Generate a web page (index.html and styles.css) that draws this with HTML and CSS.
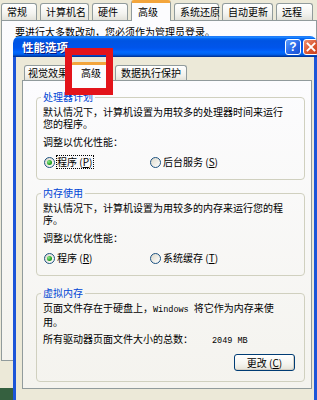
FILE: index.html
```html
<!DOCTYPE html>
<html lang="zh-CN">
<head>
<meta charset="utf-8">
<title>性能选项</title>
<link rel="stylesheet" href="styles.css">
</head>
<body>
<div class="desk">
  <div class="sysprop">
    <div class="stabs">
      <div class="stab w36">常规</div>
      <div class="stab w49">计算机名</div>
      <div class="stab w36">硬件</div>
      <div class="stab sel w40">高级</div>
      <div class="stab w45">系统还原</div>
      <div class="stab w51">自动更新</div>
      <div class="stab w37">远程</div>
    </div>
    <div class="spanel">
      <p class="snote">要进行大多数改动，您必须作为管理员登录。</p>
    </div>
  </div>

  <div class="dialog">
    <div class="titlebar">
      <span class="title">性能选项</span>
      <span class="tbtn help">?</span>
      <span class="tbtn close"><svg width="10" height="10" viewBox="0 0 10 10"><path d="M1.5 1.5 L8.5 8.5 M8.5 1.5 L1.5 8.5" stroke="#fff" stroke-width="1.8" stroke-linecap="square"/></svg></span>
    </div>
    <div class="dbody">
      <div class="tabs">
        <div class="tab t1">视觉效果</div>
        <div class="tab sel">高级</div>
        <div class="tab t3">数据执行保护</div>
      </div>
      <div class="panel">
        <fieldset class="group">
          <legend>处理器计划</legend>
          <p class="desc">默认情况下，计算机设置为用较多的处理器时间来运行<br>您的程序。</p>
          <p class="lbl">调整以优化性能：</p>
          <div class="opts">
            <div class="opt"><span class="radio on"></span><span class="otext focus">程序 (<u>P</u>)</span></div>
            <div class="opt"><span class="radio"></span><span class="otext">后台服务 (<u>S</u>)</span></div>
          </div>
        </fieldset>

        <fieldset class="group g2">
          <legend>内存使用</legend>
          <p class="desc">默认情况下，计算机设置为用较多的内存来运行您的程<br>序。</p>
          <p class="lbl">调整以优化性能：</p>
          <div class="opts">
            <div class="opt"><span class="radio on"></span><span class="otext">程序 (<u>R</u>)</span></div>
            <div class="opt"><span class="radio"></span><span class="otext">系统缓存 (<u>T</u>)</span></div>
          </div>
        </fieldset>

        <fieldset class="group g3">
          <legend>虚拟内存</legend>
          <p class="desc">页面文件存在于硬盘上，<span class="mono">Windows </span>将它作为内存来使<br>用。</p>
          <div class="total">
            <span class="total-l">所有驱动器页面文件大小的总数：</span>
            <span class="mono">2049 MB</span>
          </div>
          <div class="btnrow">
            <span class="btn">更改 (<u>C</u>)</span>
          </div>
        </fieldset>
      </div>
    </div>
  </div>

  <div class="redbox"></div>
</div>
</body>
</html>
```

FILE: styles.css
```css
html, body {
  margin: 0;
  padding: 0;
}

body {
  width: 317px;
  height: 400px;
  overflow: hidden;
  background: #35603F;
  font-family: "Noto Sans CJK SC", "Noto Sans", sans-serif;
  font-size: 10px;
  line-height: 12px;
  color: #000;
}

.desk {
  position: relative;
  width: 317px;
  height: 400px;
  overflow: hidden;
}

/* ---------- background window (System Properties) ---------- */
.sysprop {
  position: absolute;
  left: 0;
  top: 0;
  width: 317px;
  height: 388px;
  background: #ECE9D8;
  display: flex;
  flex-direction: column;
}

.stabs {
  display: flex;
  align-items: flex-end;
  gap: 3px;
  height: 20px;
  padding-left: 1px;
  position: relative;
  z-index: 1;
}

.stab {
  box-sizing: border-box;
  height: 17px;
  padding-left: 5px;
  border: 1px solid #919B9C;
  border-bottom: none;
  border-radius: 3px 3px 0 0;
  background: linear-gradient(#FFFFFF, #F3F3EF 60%, #E3E2DA);
  display: flex;
  align-items: center;
  white-space: nowrap;
  flex: none;
}

.stab.sel {
  height: 21px;
  margin-bottom: -1px;
  padding-left: 6px;
  background: #FCFCFE;
  border-top: 3px solid #F3A53C;
}

.w36 { width: 36px; }
.w37 { width: 37px; }
.w40 { width: 40px; }
.w45 { width: 45px; }
.w49 { width: 49px; }
.w51 { width: 51px; }

.spanel {
  box-sizing: border-box;
  height: 341px;
  margin-left: 1px;
  border: 1px solid #919B9C;
  background: linear-gradient(#FCFCFE, #F4F3EE);
}

.snote {
  margin: 5px 0 0 13px;
  white-space: nowrap;
}

/* ---------- dialog ---------- */
.dialog {
  position: absolute;
  left: 13px;
  top: 36px;
  width: 304px;
  height: 364px;
  display: flex;
  flex-direction: column;
  z-index: 2;
}

.titlebar {
  flex: none;
  height: 21px;
  border-radius: 7px 7px 0 0;
  background: linear-gradient(to bottom,
    #0058EE 0%, #3593FF 4%, #288EFF 6%, #127DFF 8%, #036FFC 10%,
    #0262EE 14%, #0057E5 20%, #0054E3 24%, #0055EB 56%, #005BF5 66%,
    #026AFE 76%, #0062EF 86%, #0052D6 92%, #0040AB 94%, #003092 100%);
  display: flex;
  align-items: center;
  padding-left: 9px;
  overflow: hidden;
}

.title {
  color: #fff;
  font-weight: 700;
  font-size: 11.5px;
  text-shadow: 1px 1px 0 #0A1883;
  white-space: nowrap;
}

.tbtn {
  box-sizing: border-box;
  flex: none;
  width: 16px;
  height: 16px;
  border: 1px solid #fff;
  border-radius: 3px;
  display: flex;
  align-items: center;
  justify-content: center;
}

.help {
  margin-left: auto;
  background: linear-gradient(135deg, #5A9CFF, #2663E6 60%, #1A52D0);
  color: #fff;
  font-family: "Liberation Sans", sans-serif;
  font-weight: 700;
  font-size: 12px;
}

.close {
  margin-left: 2px;
  margin-right: -2px;
  background: linear-gradient(135deg, #EE9274, #DA5530 55%, #C8401C);
}

.dbody {
  flex: 1;
  background: #ECE9D8;
  border-left: 3px solid #1C55D8;
  border-right: 3px solid #1C55D8;
  padding: 5px 2px 0 6px;
  display: flex;
  flex-direction: column;
}

.tabs {
  display: flex;
  align-items: flex-end;
  height: 18px;
  padding-left: 2px;
  position: relative;
  z-index: 1;
}

.tab {
  box-sizing: border-box;
  flex: none;
  height: 15px;
  padding: 0 5px;
  border: 1px solid #919B9C;
  border-bottom: none;
  border-radius: 3px 3px 0 0;
  background: linear-gradient(#FFFFFF, #F0F0EA 70%, #E3E2DA);
  display: flex;
  align-items: center;
  white-space: nowrap;
}

.tab.t1 { padding: 0 4px 0 3px; }
.tab.t3 { margin-left: 4px; }

.tab.sel {
  height: 19px;
  margin: 0 0 -1px -2px;
  padding: 0 9px;
  background: #FCFCFE;
  border-top: 3px solid #F3A53C;
  position: relative;
}

.panel {
  box-sizing: border-box;
  height: 309px;
  border: 1px solid #919B9C;
  background: linear-gradient(#FCFCFE, #F4F3EE);
  padding: 10px 6px 0 13px;
}

.group {
  margin: 0;
  min-width: 0;
  border: 1px solid #D0D0BF;
  border-radius: 4px;
  padding: 3px 9px 10px 6px;
}

.group.g2 { margin-top: 7px; }
.group.g3 { margin-top: 11px; }

.group legend {
  margin-left: -2px;
  padding: 0 2px;
  color: #0046D5;
  line-height: 12px;
  white-space: nowrap;
}

.desc {
  margin: 0;
  line-height: 12px;
  white-space: nowrap;
}

.lbl {
  margin: 6px 0 0;
  white-space: nowrap;
}

.opts {
  display: flex;
  align-items: center;
  height: 14px;
  margin-top: 7px;
  padding-left: 1px;
}

.opt {
  display: flex;
  align-items: center;
  width: 106px;
  flex: none;
}

.radio {
  box-sizing: border-box;
  flex: none;
  width: 11px;
  height: 11px;
  border: 1px solid #1C5180;
  border-radius: 50%;
  background: linear-gradient(135deg, #DCD9CB, #FFFFFF);
  display: flex;
  align-items: center;
  justify-content: center;
}

.radio.on::after {
  content: "";
  width: 5px;
  height: 5px;
  border-radius: 50%;
  background: radial-gradient(circle at 35% 35%, #8BEA8B, #21A121 60%, #188A18);
}

.otext {
  margin-left: 1px;
  padding: 0 1px 0 0;
  border: 1px dotted transparent;
  line-height: 12px;
  white-space: nowrap;
}

.otext.focus { border-color: #000; }

.mono {
  font-family: "Liberation Mono", monospace;
  font-size: 8.5px;
  white-space: pre;
}

.total {
  display: flex;
  align-items: baseline;
  margin-top: 5px;
  white-space: nowrap;
}

.total-l { width: 169px; flex: none; }

.btnrow {
  display: flex;
  justify-content: flex-end;
  margin-top: 7px;
}

.btn {
  box-sizing: border-box;
  width: 61px;
  height: 17px;
  border: 1px solid #003C74;
  border-radius: 3px;
  background: linear-gradient(#FFFFFF, #F5F4EF 60%, #E6E3D8);
  box-shadow: inset -1px -1px 0 #D6D0C5;
  display: flex;
  align-items: center;
  justify-content: center;
  white-space: nowrap;
}

/* ---------- annotation overlay ---------- */
.redbox {
  position: absolute;
  left: 65px;
  top: 48px;
  width: 48px;
  height: 47px;
  box-sizing: border-box;
  border: 7px solid #E3141B;
  z-index: 5;
}
```
